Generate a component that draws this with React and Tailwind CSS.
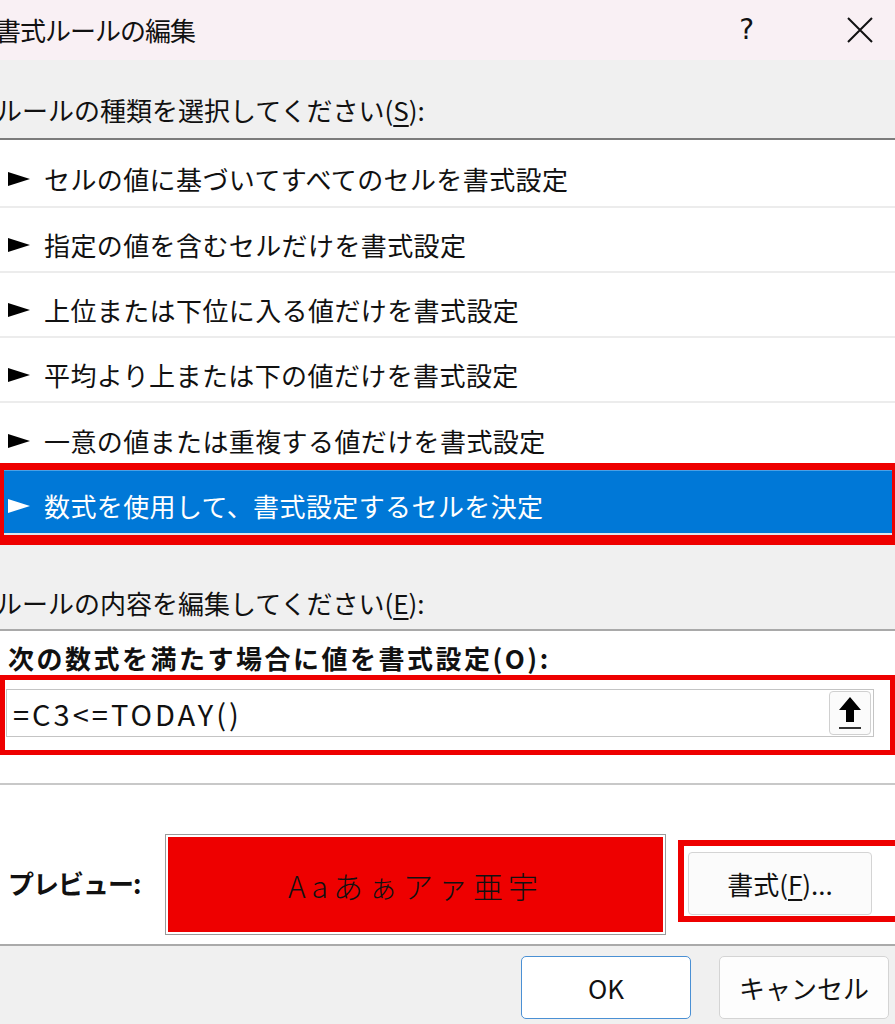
import React from "react";

const F = { fontFamily: '"Noto Sans CJK JP", "Noto Sans", sans-serif' };

function Arrow({ light }) {
  return (
    <svg width="22" height="16" viewBox="0 0 22 16" className="shrink-0">
      <polygon points="0,1 22,8 0,15" fill={light ? "#ffffff" : "#000000"} />
    </svg>
  );
}

function Row({ children, first, last }) {
  return (
    <div
      className={
        "flex items-center pl-[8px] " +
        (first ? "h-[68px] pt-[12px] " : last ? "h-[60px] pt-[16px] " : "h-[65px] pt-[10px] ") +
        (last ? "" : "border-b-2 border-[#ececec]")
      }
    >
      <Arrow />
      <span className="ml-[14px] text-[26px] leading-[36px] tracking-[0.4px] text-[#111]">{children}</span>
    </div>
  );
}

function UpIcon() {
  return (
    <svg width="24" height="36" viewBox="0 0 24 36">
      <polygon points="12,2 23,15 16,15 16,27 8,27 8,15 1,15" fill="#000" />
      <rect x="1" y="32" width="22" height="2" fill="#333" />
    </svg>
  );
}

export default function App() {
  return (
    <div style={F} className="w-[895px] h-[1024px] overflow-hidden bg-[#f0f0f0] text-[#111]">
      {/* title bar */}
      <div className="h-[60px] bg-[#f9f0f4] flex items-center">
        <span className="-ml-[5px] text-[26px] leading-[36px] tracking-[-1px]">書式ルールの編集</span>
        <span className="ml-auto mr-[93px] text-[28px] leading-[36px]" style={{ fontFamily: '"DejaVu Sans", sans-serif' }}>?</span>
        <svg width="26" height="26" viewBox="0 0 26 26" className="mr-[22px]">
          <path d="M1 1 L25 25 M25 1 L1 25" stroke="#111" strokeWidth="2" />
        </svg>
      </div>

      {/* section label */}
      <div className="h-[78px] pt-[32px]">
        <div className="-ml-[4px] text-[26px] leading-[36px]">
          ルールの種類を選択してください(<span className="underline underline-offset-4">S</span>):
        </div>
      </div>

      {/* list */}
      <div className="border-t-2 border-[#7c7c7c] bg-white">
        <Row first>セルの値に基づいてすべてのセルを書式設定</Row>
        <Row>指定の値を含むセルだけを書式設定</Row>
        <Row>上位または下位に入る値だけを書式設定</Row>
        <Row>平均より上または下の値だけを書式設定</Row>
        <Row last>一意の値または重複する値だけを書式設定</Row>
        <div className="border-t-[7px] border-b-[10px] border-l-[4px] border-r-[3px] border-[#ee0000] bg-white">
          <div className="h-[63px] bg-[#0078d7] border-t border-[#4aa0e6] flex items-center pl-[4px] pt-[8px]">
            <Arrow light />
            <span className="ml-[14px] text-[26px] leading-[36px] tracking-[0.4px] text-white">数式を使用して、書式設定するセルを決定</span>
          </div>
          <div className="h-[2px] bg-[#dfe6ec]" />
        </div>
      </div>

      {/* edit label */}
      <div className="h-[84px] pt-[40px]">
        <div className="-ml-[4px] text-[26px] leading-[36px]">
          ルールの内容を編集してください(<span className="underline underline-offset-4">E</span>):
        </div>
      </div>

      {/* edit panel */}
      <div className="border-t-2 border-[#a9a9a9] bg-white">
        <div className="h-[44px] pt-[9px] pl-[8px]">
          <div className="text-[26px] leading-[36px] font-bold tracking-[2.5px]">次の数式を満たす場合に値を書式設定(O):</div>
        </div>
        <div className="w-[895px] h-[80px] border-[5px] border-[#ee0000] pt-[9px] pl-[1px]">
          <div className="w-[868px] h-[48px] border border-[#c4c4c4] bg-white flex items-center">
            <span className="ml-[6px] text-[29px] leading-[36px] tracking-[3px]">=C3&lt;=TODAY()</span>
            <div className="ml-auto mr-[2px] w-[42px] h-[44px] border border-[#d0d0d0] rounded-[4px] bg-[#fbfbfb] flex items-center justify-center">
              <UpIcon />
            </div>
          </div>
        </div>
        <div className="h-[30px] border-b-2 border-[#c8c8c8]" />

        {/* preview */}
        <div className="h-[159px] flex items-start">
          <div className="shrink-0 mt-[80px] ml-[8px] w-[157px] text-[26px] leading-[36px] font-bold tracking-[-1px]">プレビュー:</div>
          <div className="shrink-0 mt-[49px] w-[501px] h-[101px] border border-[#9a9a9a] p-[2px] bg-white">
            <div className="w-full h-full bg-[#ee0000] flex items-center justify-center">
              <span className="text-[30px] leading-[36px] font-light tracking-[5px] text-[#111]">Aaあぁアァ亜宇</span>
            </div>
          </div>
          <div className="shrink-0 ml-[12px] mt-[55px] w-[230px] h-[82px] border-[6px] border-r-0 border-[#ee0000] pt-[6px] pl-[4px]">
            <div className="w-[184px] h-[63px] border border-[#d4d4d4] rounded-[4px] bg-[#fbfbfb] flex items-center justify-center">
              <span className="text-[26px] leading-[36px]">
                書式(<span className="underline underline-offset-4">F</span>)...
              </span>
            </div>
          </div>
        </div>
      </div>

      {/* footer */}
      <div className="border-t-2 border-[#aaaaaa] flex justify-end pt-[10px] pr-[6px] gap-[28px]">
        <div className="w-[170px] h-[63px] border border-[#4a90d4] rounded-[5px] bg-white flex items-center justify-center text-[26px] leading-[36px]">
          OK
        </div>
        <div className="w-[170px] h-[63px] border border-[#d4d4d4] rounded-[5px] bg-[#fdfdfd] flex items-center justify-center text-[26px] leading-[36px]">
          キャンセル
        </div>
      </div>
    </div>
  );
}
